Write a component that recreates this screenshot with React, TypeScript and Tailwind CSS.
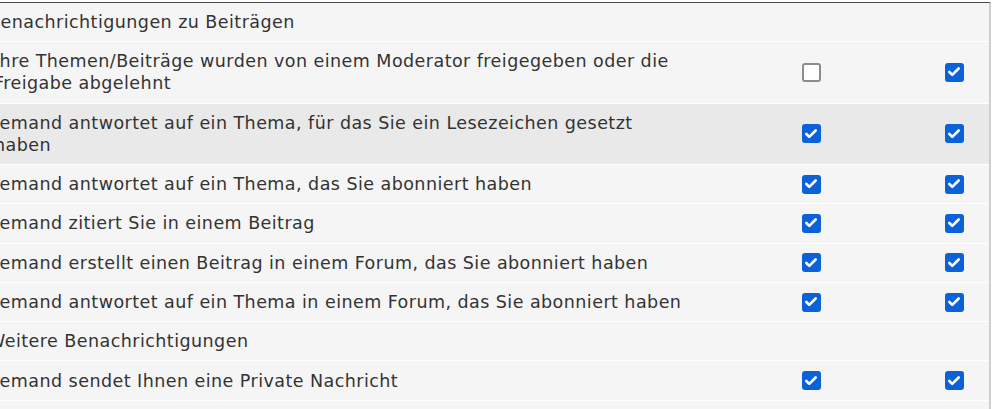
import { Check } from 'lucide-react'

type Row =
  | { kind: 'head'; label: string }
  | { kind: 'item'; label: string; a: boolean; b: boolean; hover?: boolean }

const rows: Row[] = [
  { kind: 'head', label: 'Benachrichtigungen zu Beiträgen' },
  {
    kind: 'item',
    label: 'Ihre Themen/Beiträge wurden von einem Moderator freigegeben oder die Freigabe abgelehnt',
    a: false,
    b: true,
  },
  {
    kind: 'item',
    label: 'Jemand antwortet auf ein Thema, für das Sie ein Lesezeichen gesetzt haben',
    a: true,
    b: true,
    hover: true,
  },
  { kind: 'item', label: 'Jemand antwortet auf ein Thema, das Sie abonniert haben', a: true, b: true },
  { kind: 'item', label: 'Jemand zitiert Sie in einem Beitrag', a: true, b: true },
  { kind: 'item', label: 'Jemand erstellt einen Beitrag in einem Forum, das Sie abonniert haben', a: true, b: true },
  { kind: 'item', label: 'Jemand antwortet auf ein Thema in einem Forum, das Sie abonniert haben', a: true, b: true },
  { kind: 'head', label: 'Weitere Benachrichtigungen' },
  { kind: 'item', label: 'Jemand sendet Ihnen eine Private Nachricht', a: true, b: true },
  { kind: 'item', label: 'Jemand erwähnt Sie in einem Beitrag', a: true, b: true },
]

function Box({ on }: { on: boolean }) {
  if (!on) {
    return <span className="block w-[19px] h-[19px] rounded-[3px] border-2 border-[#8c8c8c] bg-white" />
  }
  return (
    <span className="flex w-[19px] h-[19px] rounded-[3px] bg-[#0b62d8] items-center justify-center">
      <Check size={14} strokeWidth={4.5} className="text-white" />
    </span>
  )
}

export default function App() {
  return (
    <div className="w-[1000px] h-[409px] overflow-hidden bg-white pt-[2px] font-['DejaVu_Sans',sans-serif] text-[17.5px] tracking-[0.45px] text-[#333333]">
      <div className="w-[991px] border-t border-[#4a4a4a] border-r-2 border-r-[#cfcfcf]">
        {rows.map((row, i) => (
          <div
            key={i}
            className={`flex items-center border-b border-white ${
              row.kind === 'item' && row.hover ? 'bg-[#e9e9e9]' : 'bg-[#f5f5f5]'
            }`}
          >
            {row.kind === 'head' ? (
              <div className="flex-1 py-[8.1px] ml-[-12px] leading-[22.1px]">{row.label}</div>
            ) : (
              <>
                <div className="flex-1 py-[8.1px] ml-[-6px] pr-[9px] leading-[22.1px]">{row.label}</div>
                <div className="w-[216px] flex justify-center">
                  <Box on={row.a} />
                </div>
                <div className="w-[70px] flex justify-center">
                  <Box on={row.b} />
                </div>
              </>
            )}
          </div>
        ))}
      </div>
    </div>
  )
}
